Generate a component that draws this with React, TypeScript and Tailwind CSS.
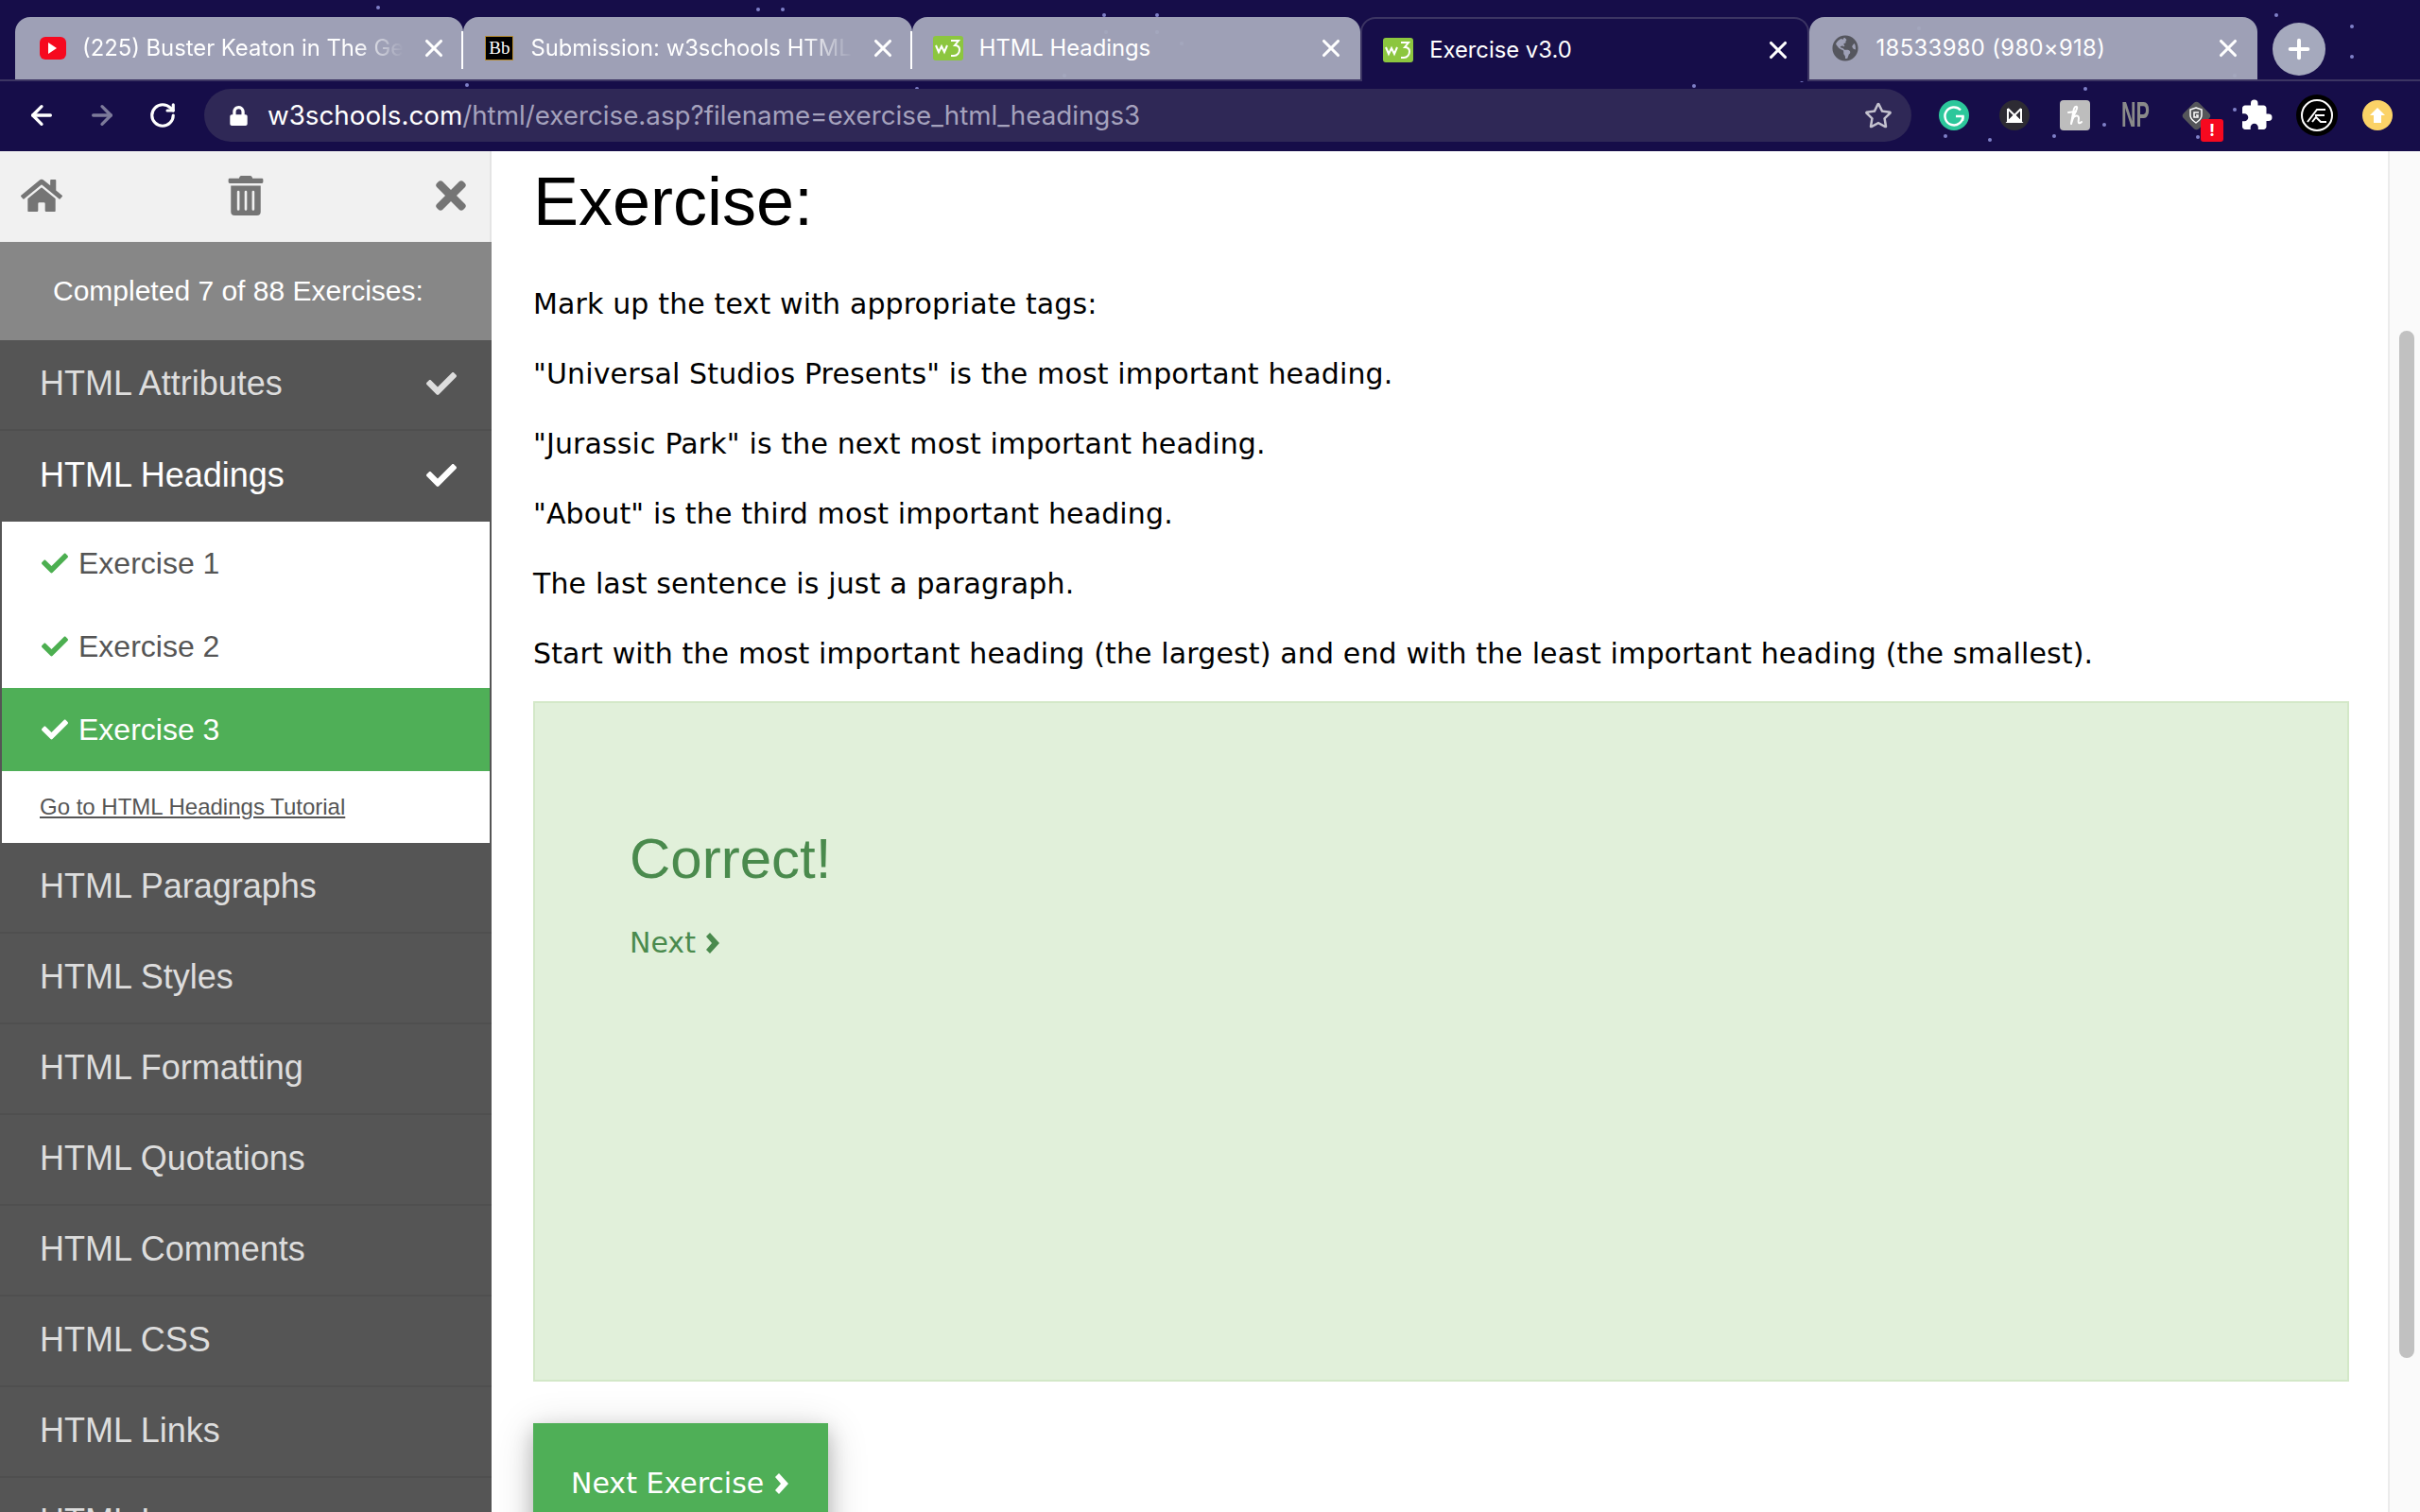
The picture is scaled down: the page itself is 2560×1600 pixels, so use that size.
import { FaHome, FaTrashAlt, FaTimes, FaCheck, FaRegStar, FaLock, FaGlobeAmericas } from 'react-icons/fa'
import { MdExtension } from 'react-icons/md'
import { ArrowLeft, ArrowRight, RotateCw, X, Plus } from 'lucide-react'
import type { ReactNode } from 'react'

const sans = "font-['Liberation_Sans',Arial,sans-serif]"

const stars = [
  [398, 6], [800, 8], [826, 8], [1166, 14], [1222, 14], [1168, 32], [1222, 32], [1248, 44], [1124, 78], [492, 88],
  [968, 92], [2406, 14], [2486, 26], [2486, 58], [2362, 78], [2204, 92], [2056, 142], [2103, 146], [2171, 142], [2362, 114],
  [2224, 130], [2323, 143], [1790, 89], [1904, 83], [2205, 58], [2220, 45], [2028, 28],
]

const topics = ['HTML Paragraphs', 'HTML Styles', 'HTML Formatting', 'HTML Quotations', 'HTML Comments', 'HTML CSS', 'HTML Links', 'HTML Images']

function W3Icon() {
  return (
    <span className="w-[32px] h-[26px] rounded-[3px] bg-[#8cc63f] flex items-center justify-center shrink-0">
      <svg width="28" height="20" viewBox="0 0 28 20" fill="none" stroke="#fff" strokeWidth="2">
        <path d="M1 7l3 7 3-6 3 6 3-7" />
        <path d="M17 2h8l-4 5c3 0 5 1.500 5 4.500S24 18 20 18h-3" />
      </svg>
    </span>
  )
}

function Chevron() {
  return (
    <svg width="15" height="22" viewBox="0 0 15 22" fill="currentColor" className="shrink-0">
      <path d="M1 4l4-4 10 11-10 11-4-4 6-7z" />
    </svg>
  )
}

function Tab({ icon, title, active, fade, divider, wide }: { icon: ReactNode; title: string; active?: boolean; fade?: boolean; divider?: boolean; wide?: boolean }) {
  return (
    <div className={`relative w-[474.4px] shrink-0 flex items-center pl-[22px] pr-[16px] gap-[17px] rounded-t-[16px] text-white ${active ? 'h-[68px] bg-[#160d49] border-t-2 border-x-2 border-[#3c3563]' : 'h-[66px] bg-[#a5a9bd]/95'}`}>
      <span className="w-[32px] flex justify-center shrink-0">{icon}</span>
      <span className={`flex-1 min-w-0 whitespace-nowrap text-[23.8px] leading-[30px] ${wide ? 'tracking-[0.36px]' : ''} ${fade ? '[mask-image:linear-gradient(to_right,#000_85%,transparent_100%)]' : ''}`}>{title}</span>
      <X size={30} strokeWidth={2.5} className="shrink-0" />
      {divider && <span className="absolute right-0 top-[15px] w-[2px] h-[40px] bg-white" />}
    </div>
  )
}

function Ext({ children, className }: { children?: ReactNode; className: string }) {
  return <span className={`flex items-center justify-center shrink-0 ${className}`}>{children}</span>
}

export default function App() {
  return (
    <div className="w-[2560px] h-[1600px] overflow-hidden bg-white flex flex-col font-['Inter',sans-serif]">
      {/* Browser chrome */}
      <div className="relative h-[160px] shrink-0 bg-[#160d49] flex flex-col">
        {stars.map(([x, y], i) => (
          <span key={i} className="absolute w-[4px] h-[4px] rounded-full bg-[#7f80c8]" style={{ left: x, top: y }} />
        ))}
        <div className="relative h-[86px] pt-[18px] pl-[16px] flex items-start border-b-2 border-[#3c3563]">
          <Tab
            title="(225) Buster Keaton in The Ge"
            fade
            divider
            icon={
              <span className="ml-[3px] w-[28px] h-[24px] rounded-[6px] bg-[#f6091f] flex items-center justify-center shrink-0">
                <span className="border-l-[9px] border-l-white border-y-[6px] border-y-transparent" />
              </span>
            }
          />
          <Tab
            title="Submission: w3schools HTML"
            fade
            divider
            icon={
              <span className="w-[30px] h-[26px] bg-black border border-[#b58a2e] text-white text-[19px] leading-[24px] text-center shrink-0 font-['Liberation_Serif',serif]">Bb</span>
            }
          />
          <Tab title="HTML Headings" icon={<W3Icon />} />
          <Tab title="Exercise v3.0" active icon={<W3Icon />} />
          <Tab title="18533980 (980×918)" wide icon={<FaGlobeAmericas size={28} className="text-[#55565e] shrink-0" />} />
          <span className="ml-[16px] mt-[6px] w-[56px] h-[56px] rounded-full bg-[#a5a9bd] flex items-center justify-center text-white shrink-0">
            <Plus size={32} strokeWidth={3} />
          </span>
        </div>
        <div className="relative flex-1 flex items-center pl-[28px] pb-[2px]">
          <ArrowLeft size={32} strokeWidth={2.5} className="text-white shrink-0" />
          <ArrowRight size={32} strokeWidth={2.5} className="text-[#7d7a9a] shrink-0 ml-[32px]" />
          <RotateCw size={30} strokeWidth={2.5} className="text-white shrink-0 ml-[33px]" />
          <div className="ml-[29px] w-[1806px] h-[56px] rounded-full bg-[#2f2856] flex items-center pl-[26px] pr-[20px] shrink-0">
            <FaLock size={21} className="text-white shrink-0" />
            <span className="ml-[20px] pt-[1px] flex-1 text-[27.75px] whitespace-nowrap text-[#a5a2bd]">
              <span className="text-white">w3schools.com</span>/html/exercise.asp?filename=exercise_html_headings3
            </span>
            <FaRegStar size={30} className="text-[#c4c2cf] shrink-0" />
          </div>
          {/* Extensions */}
          <div className="ml-[29px] flex items-center gap-[32px]">
            <Ext className="w-[32px] h-[32px] rounded-full bg-[#2cc79b]">
              <svg width="32" height="32" viewBox="0 0 32 32" fill="none" stroke="#fff" strokeWidth="2.500">
                <path d="M23 10.500A9.500 9.500 0 1 0 25.500 17H18" />
                <path d="M25.500 17l-.5 5" />
              </svg>
            </Ext>
            <Ext className="w-[32px] h-[32px] rounded-full bg-[#2d2b33]">
              <svg width="32" height="32" viewBox="0 0 32 32" fill="none" stroke="#fff" strokeWidth="2">
                <path d="M9 9L23 23M23 9L9 23" />
                <path d="M9 9v14h14V9" />
                <path d="M16 16l7 7H9z" fill="#fff" />
              </svg>
            </Ext>
            <Ext className="w-[32px] h-[32px] rounded-[4px] bg-[#bdbdbd]">
              <svg width="32" height="32" viewBox="0 0 32 32" fill="none" stroke="#fff" strokeWidth="2" strokeLinecap="round">
                <path d="M12 25C14 18 16 13 18 9c1-3-2-3-3 0-1 4-2 10-3 16" />
                <path d="M13 20c2-4 7-5 7-1 0 2-1 4 0 5 1 1 2 0 3-1" />
                <path d="M9 13l8-1" />
              </svg>
            </Ext>
            <Ext className="w-[32px] h-[32px] text-[#8a8a8a] text-[36px] leading-none font-bold scale-x-[0.6] font-['Liberation_Sans',sans-serif]">NP</Ext>
            <Ext className="relative w-[32px] h-[32px]">
              <span className="w-[23px] h-[23px] rotate-45 rounded-[4px] bg-[#55565a]" />
              <svg className="absolute left-[8px] top-[7px]" width="16" height="18" viewBox="0 0 16 18" fill="none" stroke="#fff" strokeWidth="1.500">
                <path d="M8 1l6 2v6c0 4-3 6-6 8-3-2-6-4-6-8V3z" />
                <path d="M11 6H6v5h4V9H8" />
              </svg>
              <span className="absolute left-[21px] top-[20px] w-[24px] h-[24px] rounded-[3px] bg-[#f6091f] text-white text-[18px] font-bold leading-[24px] text-center">!</span>
            </Ext>
            <Ext className="w-[32px] h-[32px]">
              <MdExtension size={36} className="text-white shrink-0" />
            </Ext>
            <Ext className="w-[32px] h-[44px]">
              <span className="w-[44px] h-[44px] shrink-0 rounded-full bg-black flex items-center justify-center">
                <span className="w-[34px] h-[34px] rounded-full border-2 border-white flex items-center justify-center">
                  <svg width="22" height="18" viewBox="0 0 22 18" fill="none" stroke="#fff" strokeWidth="2">
                    <path d="M1 16L11 3h9" />
                    <path d="M9 9h10" />
                    <path d="M6 16l4-5 5 5h6" />
                  </svg>
                </span>
              </span>
            </Ext>
            <Ext className="w-[32px] h-[32px] rounded-full bg-[#fbd267]">
              <svg width="18" height="18" viewBox="0 0 18 18" fill="#fff"><path d="M9 1l8 8h-4v8H5V9H1z" /></svg>
            </Ext>
          </div>
        </div>
      </div>

      <div className="flex-1 min-h-0 flex">
        {/* Sidebar */}
        <aside className={`w-[520px] shrink-0 overflow-hidden flex flex-col bg-[#555555] ${sans}`}>
          <div className="h-[96px] shrink-0 bg-[#f1f1f1] border-r-2 border-[#e4e4e4] flex items-center justify-between pl-[22px] pr-[18px] pb-[2px] text-[#757575]">
            <FaHome size={44} />
            <FaTrashAlt size={42} />
            <FaTimes size={46} />
          </div>
          <div className="h-[104px] shrink-0 bg-[#878787] text-white text-[30px] flex items-center pl-[56px] pb-[2px]">Completed 7 of 88 Exercises:</div>
          <div className="h-[96px] shrink-0 border-b-2 border-[#4f4f4f] flex items-center justify-between pl-[42px] pr-[37px] pb-[2px] text-[36px] text-[#dddddd]">
            HTML Attributes
            <FaCheck size={32} />
          </div>
          <div className="h-[96px] shrink-0 flex items-center justify-between pl-[42px] pr-[37px] pb-[2px] text-[36px] text-white">
            HTML Headings
            <FaCheck size={32} />
          </div>
          <div className="h-[340px] shrink-0 bg-white border-x-2 border-[#555555] flex flex-col text-[#555555]">
            {[1, 2, 3].map(n => (
              <div key={n} className={`h-[88px] shrink-0 flex items-center pl-[42px] gap-[11px] text-[32px] ${n === 3 ? 'bg-[#4faf57] text-white' : ''}`}>
                <FaCheck size={28} className={n === 3 ? 'text-white' : 'text-[#4caf50]'} />
                Exercise {n}
              </div>
            ))}
            <div className="flex-1 flex items-center pl-[40px] text-[24px] underline">Go to HTML Headings Tutorial</div>
          </div>
          {topics.map(t => (
            <div key={t} className="h-[96px] shrink-0 border-b-2 border-[#4f4f4f] flex items-center pl-[42px] pb-[2px] text-[36px] text-[#dddddd]">{t}</div>
          ))}
        </aside>

        {/* Exercise content */}
        <main className="relative flex-1 min-w-0 overflow-hidden pl-[44px] pr-[75px] font-['DejaVu_Sans',Verdana,sans-serif] text-black">
          <h1 className={`text-[72px] leading-none mt-[17px] ${sans}`}>Exercise:</h1>
          <div className="mt-[55px] flex flex-col gap-[38px] text-[30px] leading-[36px] tracking-[0.14px]">
            <p>Mark up the text with appropriate tags:</p>
            <p>"Universal Studios Presents" is the most important heading.</p>
            <p>"Jurassic Park" is the next most important heading.</p>
            <p>"About" is the third most important heading.</p>
            <p>The last sentence is just a paragraph.</p>
            <p>Start with the most important heading (the largest) and end with the least important heading (the smallest).</p>
          </div>
          <section className="mt-[32px] h-[720px] bg-[#e1f0da] border-2 border-[#d3e8c8] pl-[100px] pt-[135px] text-[#4a8a4d]">
            <h2 className={`text-[60px] leading-none ${sans}`}>Correct!</h2>
            <p className="mt-[41px] flex items-center gap-[10px] text-[30px] leading-[36px]">Next <Chevron /></p>
          </section>
          <div className="mt-[44px] w-[312px] h-[160px] bg-[#4faf57] text-white text-[30px] pl-[40px] pt-[46px] leading-[36px] whitespace-nowrap shadow-[0_8px_20px_rgba(0,0,0,0.2),0_8px_40px_rgba(0,0,0,0.19)]">
            <p className="flex items-center gap-[11px]">Next Exercise <Chevron /></p>
          </div>

          {/* Scrollbar */}
          <div className="absolute right-0 top-0 bottom-0 w-[34px] bg-[#fafafa] border-l-2 border-[#ececec]">
            <div className="absolute left-[10px] top-[190px] w-[16px] h-[1087px] rounded-full bg-[#c1c1c1]" />
          </div>
        </main>
      </div>
    </div>
  )
}
